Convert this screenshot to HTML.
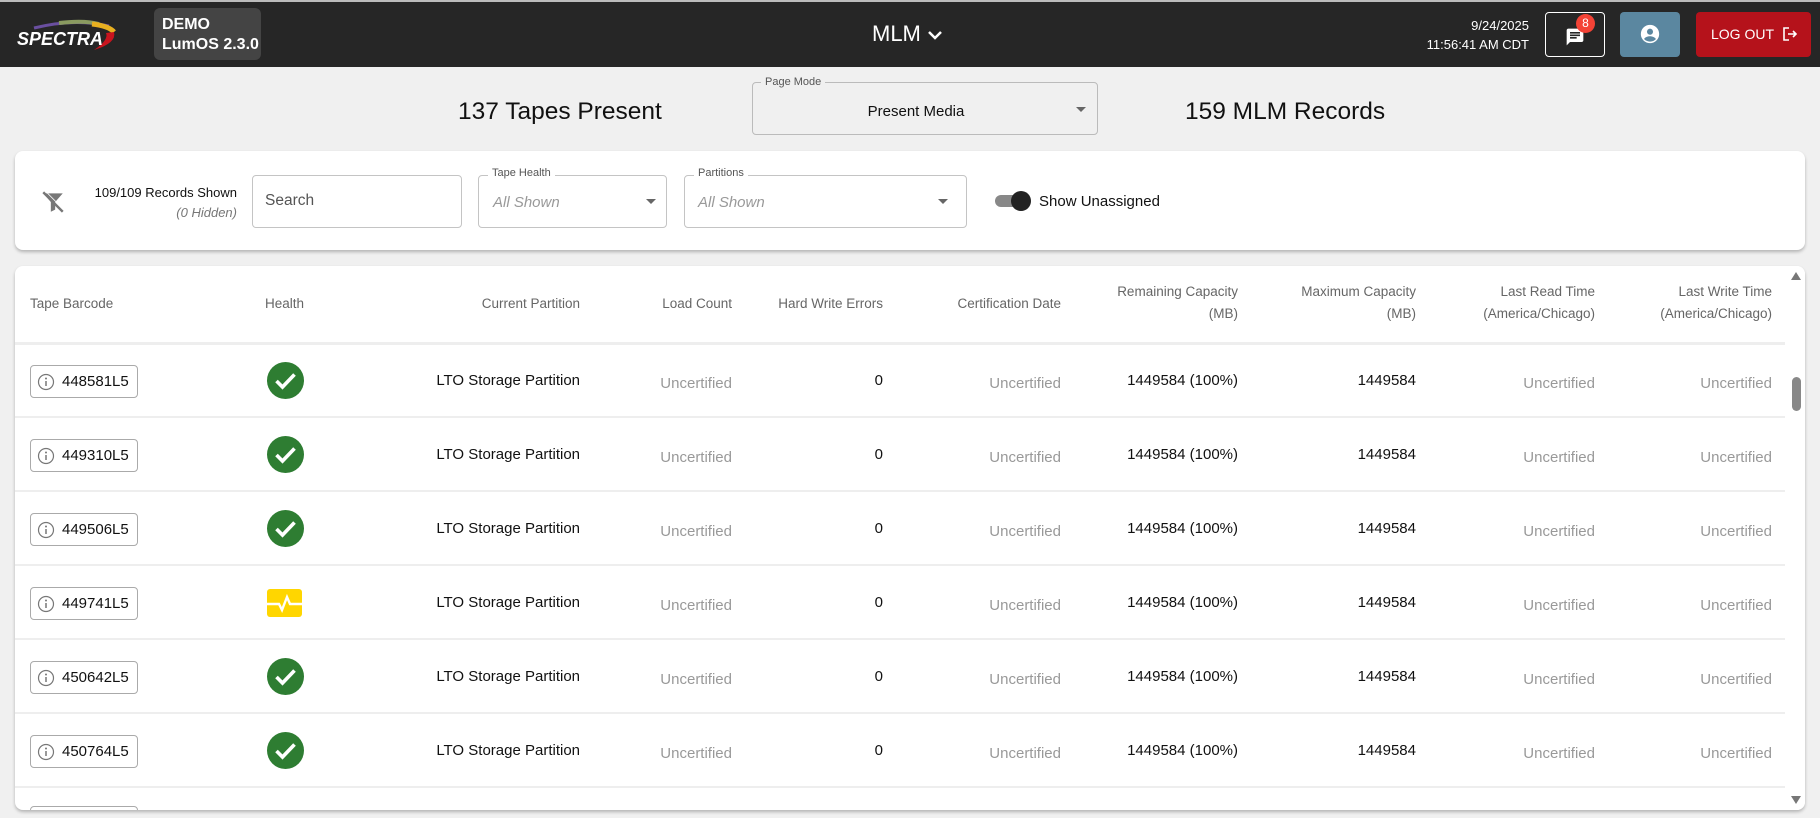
<!DOCTYPE html>
<html><head><meta charset="utf-8"><style>
*{box-sizing:border-box;margin:0;padding:0}
body{width:1820px;height:818px;background:#f0f0f0;font-family:"Liberation Sans",Arial,sans-serif;position:relative;overflow:hidden;color:#111}
.abs{position:absolute}
.hdr{left:0;top:0;width:1820px;height:67px;background:#262626;border-top:2px solid #bbb}
.demo{left:154px;top:8px;width:107px;height:52px;background:#444;border-radius:6px;color:#fff;font-weight:bold;font-size:16px;line-height:20px;padding:7px 0 0 8px}
.outl{border:1px solid #c4c4c4;border-radius:4px}
.lbl{font-size:11px;color:#555;background:#fff;padding:0 4px}
.it{font-style:italic;color:#999;font-size:15px}
.card{background:#fff;border-radius:8px;box-shadow:0 2px 3px rgba(0,0,0,.25)}
.th{font-size:13.5px;color:#666;text-align:right;line-height:22px}
.row{left:15px;width:1770px;height:74px;border-bottom:2px solid #eee}
.c{position:absolute;font-size:15px;text-align:right;top:0;line-height:74px}
.g{color:#999}
.chip{position:absolute;left:15px;top:21px;width:108px;height:33px;border:1px solid #aaa;border-radius:4px;font-size:15px;line-height:31px;padding-left:31px}
.chip svg{position:absolute;left:6px;top:7px}
</style></head><body>
<div class="abs hdr"></div>
<svg class="abs" style="left:14px;top:18px" width="110" height="36" viewBox="0 0 110 36">
<path d="M20 10 Q60 0 95 8" stroke="#6a4fa0" stroke-width="3" fill="none"/>
<path d="M45 5 Q70 2 85 6" stroke="#8a9a60" stroke-width="4" fill="none"/>
<path d="M78 6 Q95 8 100 14" stroke="#e8b020" stroke-width="5" fill="none"/>
<path d="M100 14 Q103 25 80 32 Q95 22 92 15Z" fill="#c8141e"/>
<text x="3" y="27" font-family="Liberation Sans" font-style="italic" font-weight="bold" font-size="18" fill="#fff">SPECTRA</text>
</svg>
<div class="abs demo">DEMO<br>LumOS 2.3.0</div>
<div class="abs" style="left:872px;top:21px;color:#fff;font-size:22px">MLM <svg width="16" height="12" viewBox="0 0 16 12"><path d="M2 3l6 6 6-6" stroke="#fff" stroke-width="2.5" fill="none"/></svg></div>
<div class="abs" style="right:291px;top:16px;color:#fff;font-size:13px;line-height:19px;text-align:right">9/24/2025<br>11:56:41 AM CDT</div>
<div class="abs" style="left:1545px;top:12px;width:60px;height:45px;border:1px solid #fff;border-radius:4px">
<svg class="abs" style="left:18px;top:14px" width="22" height="20" viewBox="0 0 24 24"><path d="M20 2H4c-1.1 0-2 .9-2 2v18l4-4h14c1.1 0 2-.9 2-2V4c0-1.1-.9-2-2-2zM6 9h12v2H6zm8 5H6v-2h8zm4-6H6V6h12z" fill="#fff"/></svg>
<div class="abs" style="left:30px;top:1px;width:19px;height:19px;border-radius:50%;background:#f44336;color:#fff;font-size:12px;text-align:center;line-height:19px">8</div></div>
<div class="abs" style="left:1620px;top:12px;width:60px;height:45px;background:#5b87a0;border-radius:4px">
<svg class="abs" style="left:19px;top:11px" width="22" height="22" viewBox="0 0 24 24"><circle cx="12" cy="12" r="10" fill="#fff"/><circle cx="12" cy="9.5" r="3.3" fill="#5b87a0"/><path d="M5.5 17.5c1.5-2.3 4-3 6.5-3s5 .7 6.5 3c-1.7 1.8-4 2.8-6.5 2.8s-4.8-1-6.5-2.8z" fill="#5b87a0"/></svg></div>
<div class="abs" style="left:1696px;top:12px;width:115px;height:45px;background:#b5121b;border-radius:4px;color:#fff;font-size:14px;line-height:45px;padding-left:15px">LOG OUT <svg style="vertical-align:-3px;margin-left:4px" width="16" height="16" viewBox="0 0 16 16"><path d="M7 2H2v12h5M6 8h8M11 5l3 3-3 3" stroke="#fff" stroke-width="1.6" fill="none"/></svg></div>

<div class="abs" style="left:458px;top:98px;font-size:24.5px">137 Tapes Present</div>
<div class="abs outl" style="left:752px;top:82px;width:346px;height:53px;border-color:#bbb"></div>
<div class="abs lbl" style="left:761px;top:76px;background:#f0f0f0">Page Mode</div>
<div class="abs" style="left:746px;top:103px;width:340px;text-align:center;font-size:15px">Present Media</div>
<svg class="abs" style="left:1076px;top:107px" width="10" height="5"><path d="M0 0h10L5 5z" fill="#666"/></svg>
<div class="abs" style="left:1185px;top:98px;font-size:24.5px">159 MLM Records</div>

<div class="abs card" style="left:15px;top:151px;width:1790px;height:99px"></div>
<svg class="abs" style="left:40px;top:189px" width="26" height="26" viewBox="0 0 24 24"><path d="M3 4h18l-7 8v7l-4 2v-9z" fill="#777"/><path d="M3 3l18 18" stroke="#777" stroke-width="2.2"/><path d="M3 3l18 18" stroke="#fff" stroke-width="0.8" transform="translate(1.5 -1.5)"/></svg>
<div class="abs" style="right:1583px;top:183px;font-size:13px;line-height:20px;text-align:right">109/109 Records Shown<br><i style="color:#777">(0 Hidden)</i></div>
<div class="abs outl" style="left:252px;top:175px;width:210px;height:53px"></div>
<div class="abs" style="left:265px;top:192px;font-size:15.5px;color:#555">Search</div>
<div class="abs outl" style="left:478px;top:175px;width:189px;height:53px"></div>
<div class="abs lbl" style="left:488px;top:167px">Tape Health</div>
<div class="abs it" style="left:493px;top:194px">All Shown</div>
<svg class="abs" style="left:646px;top:199px" width="10" height="5"><path d="M0 0h10L5 5z" fill="#666"/></svg>
<div class="abs outl" style="left:684px;top:175px;width:283px;height:53px"></div>
<div class="abs lbl" style="left:694px;top:167px">Partitions</div>
<div class="abs it" style="left:698px;top:194px">All Shown</div>
<svg class="abs" style="left:938px;top:199px" width="10" height="5"><path d="M0 0h10L5 5z" fill="#666"/></svg>
<div class="abs" style="left:995px;top:195px;width:28px;height:12px;border-radius:6px;background:#888"></div>
<div class="abs" style="left:1011px;top:191px;width:20px;height:20px;border-radius:50%;background:#222"></div>
<div class="abs" style="left:1039px;top:193px;font-size:15px">Show Unassigned</div>

<div class="abs card" style="left:15px;top:266px;width:1790px;height:544px;overflow:hidden">
<div class="abs" style="left:0;top:76px;width:1770px;height:3px;background:#eee"></div>
<div class="abs th" style="left:15px;top:27px;text-align:left">Tape Barcode</div>
<div class="abs th" style="left:250px;top:27px;text-align:left">Health</div>
<div class="abs th" style="right:1225px;top:27px">Current Partition</div>
<div class="abs th" style="right:1073px;top:27px">Load Count</div>
<div class="abs th" style="right:922px;top:27px">Hard Write Errors</div>
<div class="abs th" style="right:744px;top:27px">Certification Date</div>
<div class="abs th" style="right:567px;top:15px">Remaining Capacity<br>(MB)</div>
<div class="abs th" style="right:389px;top:15px">Maximum Capacity<br>(MB)</div>
<div class="abs th" style="right:210px;top:15px">Last Read Time<br>(America/Chicago)</div>
<div class="abs th" style="right:33px;top:15px">Last Write Time<br>(America/Chicago)</div>
<div class="abs" style="left:1773px;top:0;width:17px;height:544px;background:#fff"></div>
<svg class="abs" style="left:1776px;top:6px" width="10" height="8"><path d="M0 8h10L5 0z" fill="#777"/></svg>
<svg class="abs" style="left:1776px;top:530px" width="10" height="8"><path d="M0 0h10L5 8z" fill="#777"/></svg>
<div class="abs" style="left:1777px;top:111px;width:9px;height:34px;border-radius:5px;background:#888"></div>
<div class="abs" style="left:15px;top:540px;width:108px;height:10px;border:1px solid #aaa;border-radius:4px"></div>
</div>

<div id="rows"></div>
<script>
var ids=["448581L5","449310L5","449506L5","449741L5","450642L5","450764L5"];
var h='';
var ok='<svg class="abs" style="left:252px;top:18px" width="37" height="37" viewBox="0 0 37 37"><circle cx="18.5" cy="18.5" r="18.5" fill="#2e7d32"/><path d="M9.5 19l6 6 12-12.5" stroke="#fff" stroke-width="3.6" fill="none"/></svg>';
var warn='<svg class="abs" style="left:252px;top:23px" width="35" height="28" viewBox="0 0 35 28"><rect width="35" height="28" rx="3" fill="#ffd600"/><path d="M0 15h12l3 6 5-13 3 7h12" stroke="#fff" stroke-width="2.4" fill="none"/></svg>';
for(var i=0;i<6;i++){
 var t=344+i*74;
 h+='<div class="abs row" style="top:'+t+'px">'+
 '<div class="chip"><svg width="18" height="18" viewBox="0 0 18 18"><circle cx="9" cy="9" r="7.5" stroke="#777" stroke-width="1.2" fill="none"/><path d="M9 8v5" stroke="#777" stroke-width="1.5"/><circle cx="9" cy="5.5" r="1" fill="#777"/></svg>'+ids[i]+'</div>'+
 (i==3?warn:ok)+
 '<div class="c" style="right:1205px">LTO Storage Partition</div>'+
 '<div class="c g" style="right:1053px;top:3px">Uncertified</div>'+
 '<div class="c" style="right:902px">0</div>'+
 '<div class="c g" style="right:724px;top:3px">Uncertified</div>'+
 '<div class="c" style="right:547px">1449584 (100%)</div>'+
 '<div class="c" style="right:369px">1449584</div>'+
 '<div class="c g" style="right:190px;top:3px">Uncertified</div>'+
 '<div class="c g" style="right:13px;top:3px">Uncertified</div>'+
 '</div>';
}
document.getElementById('rows').innerHTML=h;
</script>
</body></html>
